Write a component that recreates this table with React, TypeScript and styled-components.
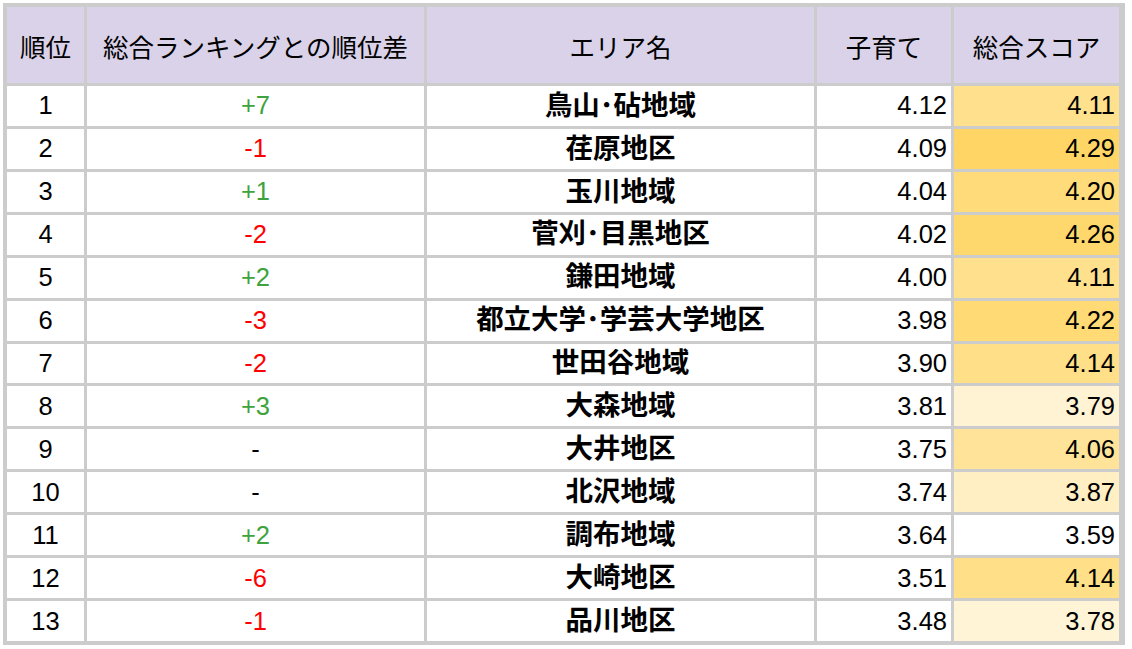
import React from 'react';
import styled, { createGlobalStyle } from 'styled-components';

type Row = {
  rank: number;
  diff: string;
  area: string;
  kosodate: string;
  total: string;
};

const rows: Row[] = [
  { rank: 1, diff: '+7', area: '鳥山･砧地域', kosodate: '4.12', total: '4.11' },
  { rank: 2, diff: '-1', area: '荏原地区', kosodate: '4.09', total: '4.29' },
  { rank: 3, diff: '+1', area: '玉川地域', kosodate: '4.04', total: '4.20' },
  { rank: 4, diff: '-2', area: '菅刈･目黒地区', kosodate: '4.02', total: '4.26' },
  { rank: 5, diff: '+2', area: '鎌田地域', kosodate: '4.00', total: '4.11' },
  { rank: 6, diff: '-3', area: '都立大学･学芸大学地区', kosodate: '3.98', total: '4.22' },
  { rank: 7, diff: '-2', area: '世田谷地域', kosodate: '3.90', total: '4.14' },
  { rank: 8, diff: '+3', area: '大森地域', kosodate: '3.81', total: '3.79' },
  { rank: 9, diff: '-', area: '大井地区', kosodate: '3.75', total: '4.06' },
  { rank: 10, diff: '-', area: '北沢地域', kosodate: '3.74', total: '3.87' },
  { rank: 11, diff: '+2', area: '調布地域', kosodate: '3.64', total: '3.59' },
  { rank: 12, diff: '-6', area: '大崎地区', kosodate: '3.51', total: '4.14' },
  { rank: 13, diff: '-1', area: '品川地区', kosodate: '3.48', total: '3.78' },
];

// white -> #ffd666 scale, like the sheet's conditional formatting
const scoreColor = (value: string) => {
  const nums = rows.map((r) => parseFloat(r.total));
  const min = Math.min(...nums);
  const max = Math.max(...nums);
  const t = (parseFloat(value) - min) / (max - min);
  const g = Math.round(255 - (255 - 214) * t);
  const b = Math.round(255 - (255 - 102) * t);
  return `rgb(255, ${g}, ${b})`;
};

const diffTone = (diff: string) => {
  if (diff.startsWith('+')) return 'up';
  if (diff.length > 1) return 'down';
  return 'none';
};

const GlobalStyle = createGlobalStyle`
  body {
    margin: 0;
    background: #ffffff;
    font-family: "Liberation Sans", "Noto Sans CJK JP", sans-serif;
  }
`;

export default function App() {
  return (
    <Page>
      <GlobalStyle />
      <Table>
        <HeadCell>順位</HeadCell>
        <HeadCell>総合ランキングとの順位差</HeadCell>
        <HeadCell>エリア名</HeadCell>
        <HeadCell>子育て</HeadCell>
        <HeadCell>総合スコア</HeadCell>

        {rows.map((r) => (
          <RowGroup key={r.rank}>
            <Cell $align="center">{r.rank}</Cell>
            <Cell $align="center">
              <Diff $tone={diffTone(r.diff)}>{r.diff}</Diff>
            </Cell>
            <AreaCell>{r.area}</AreaCell>
            <Cell $align="right">{r.kosodate}</Cell>
            <Cell $align="right" $bg={scoreColor(r.total)}>
              {r.total}
            </Cell>
          </RowGroup>
        ))}
      </Table>
    </Page>
  );
}

const Page = styled.div`
  padding: 3px;
`;

const Table = styled.div`
  display: grid;
  grid-template-columns: 77px 337px 387px 134px 165px;
  grid-template-rows: 76px repeat(13, 1fr);
  gap: 3px;
  width: max-content;
  height: 642px;
  box-sizing: border-box;
  padding: 4px 6px 4px 4px;
  background-color: #cccccc;
`;

const RowGroup = styled.div`
  display: contents;
`;

const HeadCell = styled.div`
  display: flex;
  align-items: center;
  justify-content: center;
  background-color: #d9d2e9;
  color: #000000;
  font-size: 25.5px;
  white-space: nowrap;
`;

const Cell = styled.div<{ $align: 'center' | 'right'; $bg?: string }>`
  display: flex;
  align-items: center;
  justify-content: ${(p) => (p.$align === 'right' ? 'flex-end' : 'center')};
  padding-right: ${(p) => (p.$align === 'right' ? '4px' : '0')};
  background-color: ${(p) => p.$bg || '#ffffff'};
  color: #000000;
  font-size: 25.5px;
  white-space: nowrap;
`;

const AreaCell = styled.div`
  display: flex;
  align-items: center;
  justify-content: center;
  padding-bottom: 1px;
  background-color: #ffffff;
  color: #000000;
  font-size: 27.5px;
  line-height: 1;
  font-weight: bold;
  white-space: nowrap;
`;

const Diff = styled.span<{ $tone: 'up' | 'down' | 'none' }>`
  color: ${(p) =>
    p.$tone === 'up' ? '#3ea33c' : p.$tone === 'down' ? '#ff0000' : '#000000'};
`;
